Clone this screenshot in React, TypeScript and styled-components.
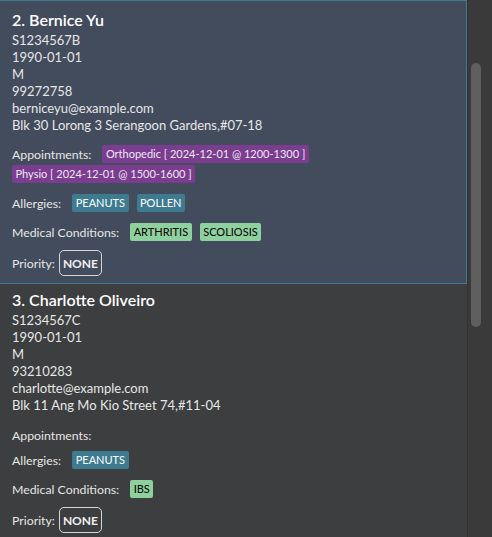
import styled, { createGlobalStyle } from "styled-components";

type Person = {
  index: number;
  name: string;
  nric: string;
  dob: string;
  gender: string;
  phone: string;
  email: string;
  address: string;
  appointments: string[];
  allergies: string[];
  conditions: string[];
  priority: string;
};

const people: Person[] = [
  {
    index: 2,
    name: "Bernice Yu",
    nric: "S1234567B",
    dob: "1990-01-01",
    gender: "M",
    phone: "99272758",
    email: "berniceyu@example.com",
    address: "Blk 30 Lorong 3 Serangoon Gardens,#07-18",
    appointments: [
      "Orthopedic [ 2024-12-01 @ 1200-1300 ]",
      "Physio [ 2024-12-01 @ 1500-1600 ]",
    ],
    allergies: ["PEANUTS", "POLLEN"],
    conditions: ["ARTHRITIS", "SCOLIOSIS"],
    priority: "NONE",
  },
  {
    index: 3,
    name: "Charlotte Oliveiro",
    nric: "S1234567C",
    dob: "1990-01-01",
    gender: "M",
    phone: "93210283",
    email: "charlotte@example.com",
    address: "Blk 11 Ang Mo Kio Street 74,#11-04",
    appointments: [],
    allergies: ["PEANUTS"],
    conditions: ["IBS"],
    priority: "NONE",
  },
];

const GlobalStyle = createGlobalStyle`
  html, body {
    margin: 0;
    padding: 0;
    background: #383838;
    overflow: hidden;
  }
  body {
    font-family: "Segoe UI", Lato, "Liberation Sans", sans-serif;
  }
`;

export default function App() {
  return (
    <>
      <GlobalStyle />
      <Frame>
        <List>
          <PrevCardEdge />
          {people.map((p, i) => (
            <Card key={p.index} selected={i === 0}>
              <Name>
                {p.index}. {p.name}
              </Name>
              <Detail>{p.nric}</Detail>
              <Detail>{p.dob}</Detail>
              <Detail>{p.gender}</Detail>
              <Detail>{p.phone}</Detail>
              <Detail>{p.email}</Detail>
              <Detail>{p.address}</Detail>
              <Section $empty={p.appointments.length === 0}>
                <Label>Appointments:</Label>
                {p.appointments.map((a) => (
                  <Tag key={a} kind="appointment">
                    {a}
                  </Tag>
                ))}
              </Section>
              <Section>
                <Label>Allergies:</Label>
                {p.allergies.map((a) => (
                  <Tag key={a} kind="allergy">
                    {a}
                  </Tag>
                ))}
              </Section>
              <Section>
                <Label>Medical Conditions:</Label>
                {p.conditions.map((c) => (
                  <Tag key={c} kind="condition">
                    {c}
                  </Tag>
                ))}
              </Section>
              <PrioritySection>
                <Label>Priority:</Label>
                <PriorityBox>{p.priority}</PriorityBox>
              </PrioritySection>
            </Card>
          ))}
        </List>
        <ScrollTrack>
          <Thumb />
        </ScrollTrack>
      </Frame>
    </>
  );
}

const Frame = styled.div`
  display: flex;
  width: 492px;
  height: 537px;
  overflow: hidden;
  background: #383838;
`;

const List = styled.div`
  width: 467px;
  flex-shrink: 0;
  display: flex;
  flex-direction: column;
  background: #3c3e3f;
`;

const PrevCardEdge = styled.div`
  height: 2px;
  background: #3a3b3d;
`;

const Card = styled.div<{ selected?: boolean }>`
  display: flex;
  flex-direction: column;
  padding: ${(p) => (p.selected ? "7px 0 7px 12px" : "3px 0 6px 12px")};
  background: ${(p) => (p.selected ? "#434c5d" : "#3c3e3f")};
  border: 1px solid ${(p) => (p.selected ? "#3e7b91" : "transparent")};
  border-left: none;
`;

const Name = styled.div`
  color: #ffffff;
  font-size: 16px;
  font-weight: 600;
  line-height: 24px;
`;

const Detail = styled.div`
  color: #e6e6e6;
  font-size: 13px;
  line-height: 17px;
`;

const Section = styled.div<{ $empty?: boolean }>`
  display: flex;
  flex-wrap: wrap;
  align-items: center;
  column-gap: 8px;
  row-gap: 2px;
  margin-top: ${(p) => (p.$empty ? "13px" : "11px")};
  min-height: ${(p) => (p.$empty ? "13px" : "18px")};
  height: ${(p) => (p.$empty ? "13px" : "auto")};
  padding-right: 12px;
`;

const PrioritySection = styled(Section)`
  column-gap: 1px;
  margin-top: 9px;
`;

const Label = styled.span`
  color: #e6e6e6;
  font-size: 12.3px;
  line-height: 17px;
  margin-right: 3px;
`;

const tagColors = {
  appointment: { bg: "#7a3d8f", fg: "#f2e6f5" },
  allergy: { bg: "#3e7b91", fg: "#ffffff" },
  condition: { bg: "#8fd19e", fg: "#000000" },
};

const Tag = styled.span<{ kind: keyof typeof tagColors }>`
  display: inline-block;
  background: ${(p) => tagColors[p.kind].bg};
  color: ${(p) => tagColors[p.kind].fg};
  font-size: 11px;
  line-height: 18px;
  padding: 0 3.5px;
  border-radius: 2px;
  white-space: nowrap;
`;

const PriorityBox = styled.span`
  display: inline-flex;
  align-items: center;
  justify-content: center;
  box-sizing: border-box;
  width: 43px;
  height: 26px;
  border: 1.5px solid #d6d6d6;
  border-radius: 5px;
  color: #f0f0f0;
  font-size: 12px;
  font-weight: 700;
`;

const ScrollTrack = styled.div`
  flex: 1;
  display: flex;
  flex-direction: column;
  padding: 63px 12px 0 3px;
  background: #3a3a3a;
  border-left: 1px solid #323232;
`;

const Thumb = styled.div`
  width: 10px;
  height: 264px;
  border-radius: 5px;
  background: #5f5f5f;
`;
